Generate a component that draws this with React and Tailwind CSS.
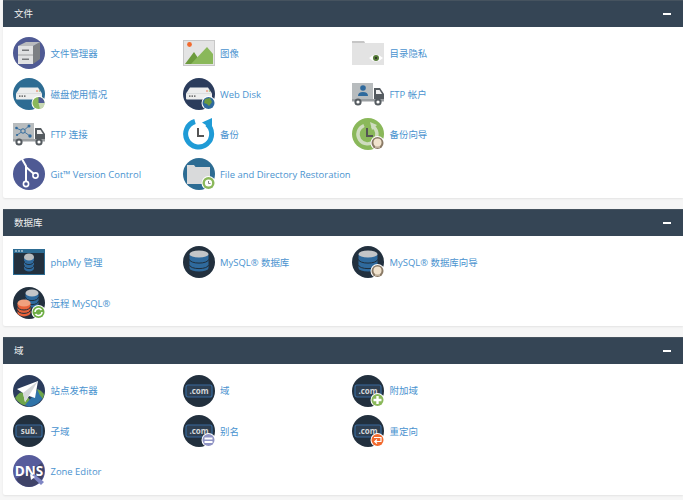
import React from 'react';

const Svg = ({ children }) => (
    <svg viewBox="0 0 32 32" className="w-8 h-8 shrink-0">
        {children}
    </svg>
);

const Badge = ({ fill = '#fff', children }) => (
    <g>
        <circle cx="25.5" cy="25" r="7" fill="#fff" />
        <circle cx="25.5" cy="25" r="6" fill={fill} />
        {children}
    </g>
);

const Server = () => (
    <g>
        <path d="M3 15.5 L7 9.5 H25 L29 15.5 V20.5 Q29 21.5 28 21.5 H4 Q3 21.5 3 20.5 Z" fill="#eceded" />
        <path d="M3 15.5 H29" stroke="#cfd2d4" strokeWidth="0.6" />
        <rect x="6" y="17.5" width="1.5" height="1.2" fill="#444" />
        <rect x="8.5" y="17.5" width="1.5" height="1.2" fill="#444" />
        <rect x="11" y="17.5" width="1.5" height="1.2" fill="#444" />
        <circle cx="24" cy="13" r="0.8" fill="#e8623a" />
        <circle cx="26.5" cy="13" r="0.8" fill="#8ab85a" />
    </g>
);

const Db = ({ x = 16, y = 8, w = 9.5, color = '#2f6a9d', top = '#c4c6c8', gap = 5.5, line = '#1f2e3b' }) => (
    <g>
        <path d={`M${x - w} ${y} V${y + gap * 2 + 3} A${w} 3.6 0 0 0 ${x + w} ${y + gap * 2 + 3} V${y} Z`} fill={color} />
        <path d={`M${x - w} ${y + gap} A${w} 3.6 0 0 0 ${x + w} ${y + gap}`} fill="none" stroke={line} strokeWidth="1" />
        <path d={`M${x - w} ${y + gap * 2} A${w} 3.6 0 0 0 ${x + w} ${y + gap * 2}`} fill="none" stroke={line} strokeWidth="1" />
        <ellipse cx={x} cy={y} rx={w} ry="3.6" fill={top} />
    </g>
);

const Com = ({ label = '.com', badge }) => (
    <Svg>
        <circle cx="16" cy="16" r="16" fill="#22303e" />
        <rect x="3" y="10" width="26" height="12" rx="2" fill="#2e3f52" stroke="#38699c" strokeWidth="1.2" />
        <text x="16" y="19.2" textAnchor="middle" fontSize="8" fontWeight="700" fill="#d4d7da" className="font-['Open_Sans',sans-serif]">
            {label}
        </text>
        {badge}
    </Svg>
);

const Truck = ({ children }) => (
    <Svg>
        <rect x="0" y="5" width="21" height="16" fill="#b8bcbe" />
        <path d="M22 10 H28 L32 16 V23 H22 Z" fill="#555b60" />
        <path d="M24 12 H27.5 L30 16 H24 Z" fill="#f2f2f2" />
        <rect x="0" y="21" width="32" height="2.5" fill="#9a9ea1" />
        <circle cx="6" cy="24" r="2.6" fill="#fff" stroke="#555b60" strokeWidth="2" />
        <circle cx="26" cy="24" r="2.6" fill="#fff" stroke="#555b60" strokeWidth="2" />
        {children}
    </Svg>
);

const Hands = ({ color = '#555' }) => <path d="M15 10 V18 H21" fill="none" stroke={color} strokeWidth="2" />;

const WizardBadge = () => (
    <Badge fill="#8a7a66">
        <circle cx="25.5" cy="24.5" r="4" fill="#f1e3cd" />
        <path d="M23 29 H28" stroke="#f1e3cd" strokeWidth="1" />
    </Badge>
);

const RestoreBadge = () => (
    <Badge fill="#8ab85a">
        <circle cx="25.5" cy="25" r="3.6" fill="#fff" />
        <path d="M25.5 23 V25.5 H27.5" fill="none" stroke="#777" strokeWidth="0.9" />
    </Badge>
);

const icons = {
    cabinet: (
        <Svg>
            <circle cx="16" cy="16" r="16" fill="#4f5a94" />
            <path d="M20 9 L27 5 V22 L20 27 Z" fill="#7c7f83" />
            <path d="M5 9 H20 V27 H5 Z" fill="#e0e1e2" />
            <path d="M5 9 L13 5 H27 L20 9 Z" fill="#b9bbbd" />
            <path d="M5 18 H20" stroke="#8f9193" strokeWidth="0.8" />
            <rect x="9" y="12.5" width="7" height="1.5" fill="#77797b" />
            <rect x="9" y="21.5" width="7" height="1.5" fill="#77797b" />
        </Svg>
    ),
    image: (
        <Svg>
            <rect x="0.5" y="3.5" width="31" height="25" fill="#e4e4e4" stroke="#c8c8c8" />
            <circle cx="6.5" cy="7.5" r="2.4" fill="#f26a2e" />
            <path d="M2 27 L11 15 L19 27 Z" fill="#6c9a3d" />
            <path d="M8 27 L24 10 L30 17 V27 Z" fill="#8ab85a" />
        </Svg>
    ),
    folderEye: (
        <Svg>
            <path d="M0 4 H12 L13 6 H32 V28 H0 Z" fill="#e3e3e3" />
            <path d="M0 4 H12 L13 6 H0 Z" fill="#c6c6c6" />
            <path d="M17 21 Q24 14 31 21 Q24 28 17 21 Z" fill="#fff" />
            <circle cx="24" cy="21" r="3" fill="#557a38" />
            <circle cx="24" cy="21" r="1" fill="#222" />
        </Svg>
    ),
    disk: (
        <Svg>
            <circle cx="16" cy="16" r="16" fill="#2d6c93" />
            <Server />
            <Badge fill="#8ab85a">
                <path d="M25.5 25 V19 A6 6 0 0 1 31.5 25 Z" fill="#4f5a94" />
                <path d="M25.5 25 H31.5 A6 6 0 0 1 27 31 Z" fill="#c8d8b4" />
            </Badge>
        </Svg>
    ),
    webDisk: (
        <Svg>
            <circle cx="16" cy="16" r="16" fill="#2b3c5c" />
            <Server />
            <Badge fill="#2f6a9d">
                <path d="M22 21 L27 20 L29 24 L26 28 L24 26 L21 25 Z" fill="#6c9a3d" />
            </Badge>
        </Svg>
    ),
    ftpAccount: (
        <Truck>
            <circle cx="11" cy="10" r="2.8" fill="#2f6a9d" />
            <path d="M6 18 Q6 14 11 14 Q16 14 16 18 Z" fill="#2f6a9d" />
        </Truck>
    ),
    ftpConn: (
        <Truck>
            <path d="M3 10 L10 13 L16 8 M10 13 L4 17 M10 13 L17 18" stroke="#2f6a9d" strokeWidth="0.8" fill="none" />
            <circle cx="10" cy="13" r="2.2" fill="#b8bcbe" stroke="#2f6a9d" strokeWidth="1" />
            <circle cx="3.5" cy="10" r="1.3" fill="#2f6a9d" />
            <circle cx="16" cy="8" r="1.5" fill="#2f6a9d" />
            <circle cx="4" cy="17" r="1.1" fill="#2f6a9d" />
            <circle cx="17" cy="18" r="1.7" fill="#2f6a9d" />
        </Truck>
    ),
    backup: (
        <Svg>
            <path d="M24 6 A13 13 0 1 1 12 3.5" fill="none" stroke="#1f9bd6" strokeWidth="5" />
            <path d="M19 4.5 L29 0 L29 11 Z" fill="#1f9bd6" />
            <Hands />
        </Svg>
    ),
    wizard: (
        <Svg>
            <circle cx="16" cy="16" r="16" fill="#8ab85a" />
            <path d="M20 8 A9.5 9.5 0 1 1 12 7.5" fill="none" stroke="#cfdcbf" strokeWidth="3.4" />
            <path d="M18 4 L25 7 L20 12 Z" fill="#cfdcbf" />
            <Hands />
            <WizardBadge />
        </Svg>
    ),
    git: (
        <Svg>
            <circle cx="16" cy="16" r="16" fill="#4f5a94" />
            <path d="M9 1 L13 8 V26 M13 9 L21 16" stroke="#fff" strokeWidth="2" fill="none" />
            <circle cx="13" cy="26" r="2.6" fill="#4f5a94" stroke="#fff" strokeWidth="1.6" />
            <circle cx="22.5" cy="17.5" r="2.6" fill="#4f5a94" stroke="#fff" strokeWidth="1.6" />
        </Svg>
    ),
    restore: (
        <Svg>
            <circle cx="16" cy="16" r="16" fill="#2d6c93" />
            <path d="M4 7 H11 L12.5 9 H27 V26 H4 Z" fill="#d9dadb" />
            <RestoreBadge />
        </Svg>
    ),
    phpmy: (
        <Svg>
            <rect x="0" y="3" width="32" height="26" fill="#2d6c93" />
            <rect x="1" y="7" width="30" height="21" fill="#22303e" />
            <circle cx="3" cy="5" r="0.8" fill="#fff" />
            <circle cx="6" cy="5" r="0.8" fill="#fff" />
            <circle cx="9" cy="5" r="0.8" fill="#fff" />
            <Db y={11} w={5} gap={4} top="#b8bcbe" line="#22303e" />
        </Svg>
    ),
    mysql: (
        <Svg>
            <circle cx="16" cy="16" r="16" fill="#22303e" />
            <Db />
        </Svg>
    ),
    mysqlWizard: (
        <Svg>
            <circle cx="16" cy="16" r="16" fill="#22303e" />
            <Db />
            <WizardBadge />
        </Svg>
    ),
    remote: (
        <Svg>
            <circle cx="16" cy="16" r="16" fill="#22303e" />
            <Db x={19} y={6} w={6.5} gap={4} />
            <Db x={11} y={16} w={6.5} gap={3.4} color="#e8623a" top="#f0a07e" />
            <Badge fill="#6fae46">
                <path d="M22 25 A3.6 3.6 0 0 1 28.5 23 M29 25 A3.6 3.6 0 0 1 22.5 27" fill="none" stroke="#fff" strokeWidth="1.5" />
            </Badge>
        </Svg>
    ),
    publisher: (
        <Svg>
            <circle cx="16" cy="16" r="16" fill="#2b3c5c" />
            <path d="M2 23 Q8 13 14 21 L20 29 Q10 34 2 23 Z" fill="#6fa54a" />
            <path d="M12 30 L19 22 L25 14 L31 20 Q28 29 16 32 Z" fill="#2f73a8" />
            <path d="M24 14 Q28 15 31 19 L30 24 Q26 20 24 14 Z" fill="#6fa54a" />
            <path d="M25 6 L4 14 L10 18 L12 27 L16 21 L22 23 Z" fill="#fff" />
            <path d="M25 6 L10 18 L12 27 Z" fill="#d5d8da" />
        </Svg>
    ),
    com: <Com />,
    sub: <Com label="sub." />,
    addon: (
        <Com
            badge={
                <Badge fill="#8ab85a">
                    <path d="M25.5 21 V29 M21.5 25 H29.5" stroke="#fff" strokeWidth="2.4" />
                </Badge>
            }
        />
    ),
    alias: (
        <Com
            badge={
                <Badge fill="#8f93c4">
                    <path d="M21.5 23.5 H29.5 M21.5 27 H29.5" stroke="#fff" strokeWidth="1.8" />
                </Badge>
            }
        />
    ),
    redirect: (
        <Com
            badge={
                <Badge fill="#f26a2e">
                    <path d="M22 22.5 H29 V26.5 H23 M25 24.5 L22.8 26.5 L25 28.5" fill="none" stroke="#fff" strokeWidth="1.2" />
                </Badge>
            }
        />
    ),
    dns: (
        <Svg>
            <circle cx="16" cy="16" r="16" fill="#575c9c" />
            <path d="M3 24 L29 8 A16 16 0 0 1 16 32 A16 16 0 0 1 3 24 Z" fill="#3f4368" />
            <text x="16" y="20.5" textAnchor="middle" fontSize="13.5" fontWeight="700" fill="#fff" className="font-['Open_Sans',sans-serif]">
                DNS
            </text>
            <path d="M18 21 L28 30 L31 27 L21 19 Z" fill="#7f86c4" />
            <path d="M17 19 L18 25 L22 22 Z" fill="#fff" />
        </Svg>
    ),
};

const sections = [
    {
        title: '文件',
        items: [
            ['cabinet', '文件管理器'],
            ['image', '图像'],
            ['folderEye', '目录隐私'],
            ['disk', '磁盘使用情况'],
            ['webDisk', 'Web Disk'],
            ['ftpAccount', 'FTP 帐户'],
            ['ftpConn', 'FTP 连接'],
            ['backup', '备份'],
            ['wizard', '备份向导'],
            ['git', 'Git™ Version Control'],
            ['restore', 'File and Directory Restoration'],
        ],
    },
    {
        title: '数据库',
        items: [
            ['phpmy', 'phpMy 管理'],
            ['mysql', 'MySQL® 数据库'],
            ['mysqlWizard', 'MySQL® 数据库向导'],
            ['remote', '远程 MySQL®'],
        ],
    },
    {
        title: '域',
        items: [
            ['publisher', '站点发布器'],
            ['com', '域'],
            ['addon', '附加域'],
            ['sub', '子域'],
            ['alias', '别名'],
            ['redirect', '重定向'],
            ['dns', 'Zone Editor'],
        ],
    },
];

const App = () => (
    <div className="w-[683px] h-[500px] overflow-hidden bg-[#f6f6f6] pl-[3px] flex flex-col gap-[11px] font-['Open_Sans','Noto_Sans_CJK_SC',sans-serif]">
        {sections.map((section) => (
            <section key={section.title} className="bg-white rounded-l-[2px] shadow-[0_1px_2px_rgba(0,0,0,0.08)]">
                <div className="h-[27px] bg-[#354555] flex items-center justify-between pl-[11px] pr-3 text-[9.5px] text-[#f0f0f0] border-t border-[#46535f]">
                    <span>{section.title}</span>
                    <span className="w-2 h-[2px] bg-white" />
                </div>
                <div className="grid grid-cols-[169.5px_169.5px_169.5px] auto-rows-[40.4px] pl-[10px] pt-[6px] pb-[3.5px]">
                    {section.items.map(([icon, label]) => (
                        <a key={label} className="flex items-center gap-[5.5px] text-[9.45px] text-[#4a93cf] whitespace-nowrap">
                            {icons[icon]}
                            <span className="pt-[2px]">{label}</span>
                        </a>
                    ))}
                </div>
            </section>
        ))}
    </div>
);

export default App;
